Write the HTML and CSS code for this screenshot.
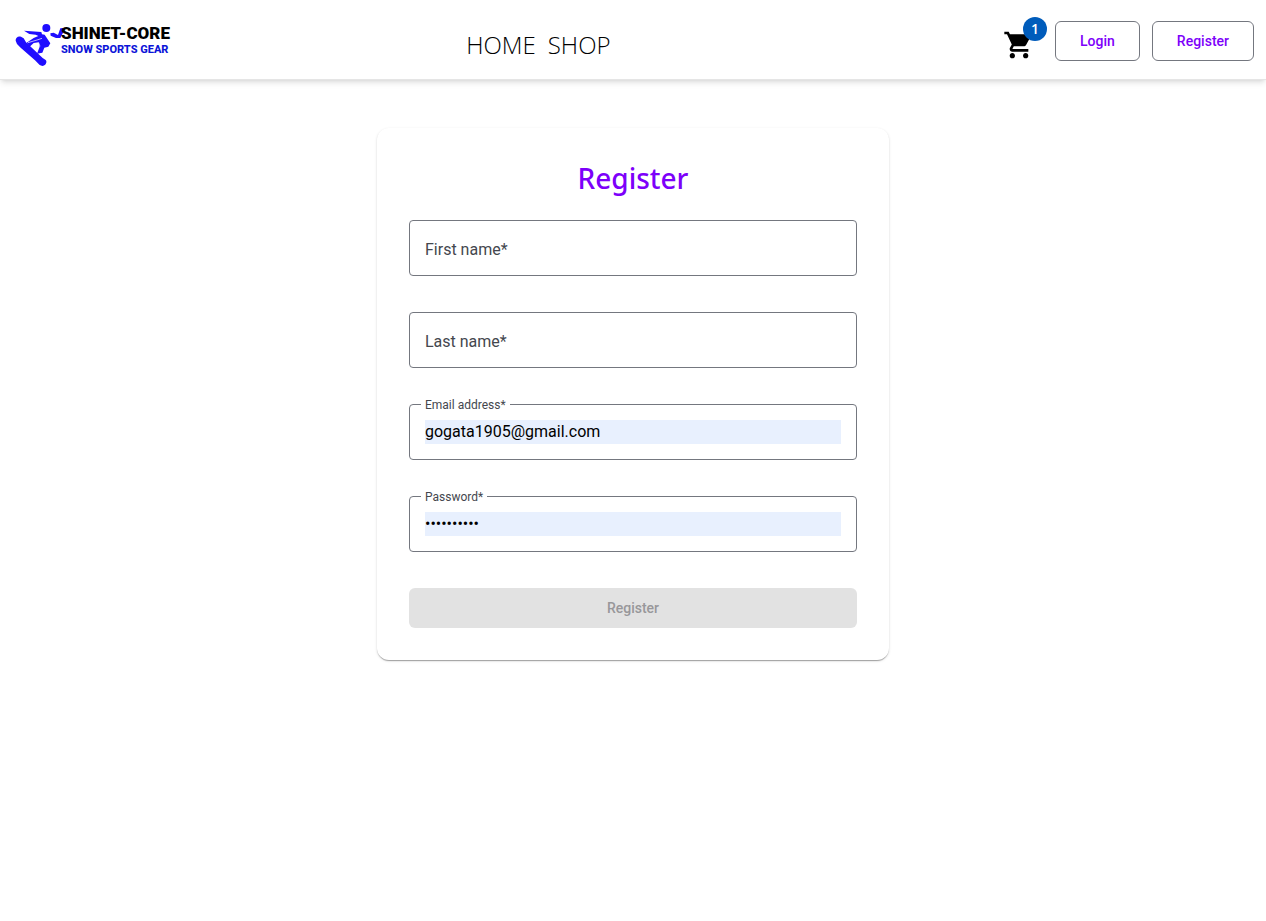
FILE: index.html
```html
<!DOCTYPE html>
<html lang="en">
<head>
<meta charset="utf-8">
<meta name="viewport" content="width=device-width, initial-scale=1">
<title>Register</title>
<link rel="stylesheet" href="styles.css">
</head>
<body>
<header class="header">
  <a class="logo" href="#">
    <svg class="logo-mark" viewBox="45 35 144 135" aria-hidden="true">
      <g fill="#1f0dff">
        <circle cx="139" cy="53" r="12"/>
        <path d="M47 91C46 81 55 76 63 79L71 84L78 96L128 143L137 149C143 155 136 167 127 167L119 164L105 150L62 112L51 101Z"/>
        <path d="M72 61L124 65L126 72L134 73L144 88L151 99L145 109L133 112L127 127L111 130L119 109L116 96L101 98L89 109L80 97L101 83L115 77L107 73L88 71Z"/>
        <path d="M151 69L161 67L174 74L181 54L189 53L189 67L181 83L168 83L152 76Z"/>
      </g>
      <path d="M84 97L111 89L126 84M116 97L120 108" fill="none" stroke="#fff" stroke-width="2"/>
    </svg>
    <span class="logo-text">
      <span class="logo-name">SHINET-CORE</span>
      <span class="logo-tag">SNOW SPORTS GEAR</span>
    </span>
  </a>
  <nav class="nav">
    <a href="#">HOME</a>
    <a href="#">SHOP</a>
  </nav>
  <div class="actions">
    <a class="cart" href="#" aria-label="Cart">
      <svg class="cart-icon" viewBox="0 0 24 24" aria-hidden="true"><path d="M7 18c-1.100 0-1.990.9-1.990 2S5.900 22 7 22s2-.9 2-2-.9-2-2-2zM1 2v2h2l3.600 7.590-1.350 2.450c-.16.28-.25.61-.25.960 0 1.100.9 2 2 2h12v-2H7.420c-.14 0-.25-.11-.25-.25l.03-.12.900-1.630h7.450c.75 0 1.410-.41 1.750-1.030l3.580-6.490c.08-.14.12-.31.12-.48 0-.55-.45-1-1-1H5.210l-.94-2H1zm16 16c-1.100 0-1.990.9-1.990 2s.89 2 1.990 2 2-.9 2-2-.9-2-2-2z"/></svg>
      <span class="badge">1</span>
    </a>
    <button class="button" type="button">Login</button>
    <button class="button" type="button">Register</button>
  </div>
</header>
<main class="page">
  <form class="card">
    <h1 class="title">Register</h1>
    <div class="field">
      <label class="label" for="first">First name*</label>
      <input class="input" id="first" type="text">
    </div>
    <div class="field">
      <label class="label" for="last">Last name*</label>
      <input class="input" id="last" type="text">
    </div>
    <div class="field filled">
      <label class="label" for="email">Email address*</label>
      <input class="input" id="email" type="email" value="gogata1905@gmail.com">
    </div>
    <div class="field filled">
      <label class="label" for="password">Password*</label>
      <input class="input" id="password" type="password" value="abcdefghij">
    </div>
    <button class="submit" type="submit" disabled>Register</button>
  </form>
</main>
</body>
</html>
```

FILE: styles.css
```css
* { box-sizing: border-box; }

body {
  margin: 0;
  background: #fff;
  font-family: Roboto, "Liberation Sans", sans-serif;
  font-size: 16px;
}

a { color: inherit; text-decoration: none; }

.header {
  display: grid;
  grid-template-columns: 12fr auto 17fr;
  align-items: center;
  padding: 12px;
  border-bottom: 1px solid #e5e5e5;
  background: #fff;
  box-shadow: 0 4px 6px -1px rgba(0, 0, 0, 0.1), 0 2px 4px -2px rgba(0, 0, 0, 0.1);
}

.logo {
  display: flex;
  align-items: center;
  padding: 10px 3px 0;
}

.logo-mark { width: 48px; height: 45px; }

.logo-text {
  display: flex;
  flex-direction: column;
  margin-left: -2px;
  padding-bottom: 8px;
  font-family: Roboto, "Liberation Sans", sans-serif;
  white-space: nowrap;
}

.logo-name { font-size: 17px; font-weight: 900; line-height: 18px; color: #000; }
.logo-tag { font-size: 11px; font-weight: 800; line-height: 16px; color: #0c14d8; }

.nav {
  display: flex;
  gap: 12px;
  padding-top: 11px;
  font-family: "Open Sans", "Noto Sans", sans-serif;
  font-size: 24px;
  font-weight: 300;
  line-height: 32px;
  color: #000;
}

.actions {
  display: flex;
  justify-content: flex-end;
  gap: 12px;
  padding-top: 3px;
}

.cart {
  position: relative;
  height: 40px;
  margin-right: 8px;
  padding-top: 8px;
}

.cart-icon { display: block; width: 32px; height: 32px; }

.badge {
  position: absolute;
  top: -4px;
  right: -12px;
  width: 24px;
  height: 24px;
  border-radius: 50%;
  background: #005cbb;
  color: #fff;
  font-family: "Open Sans", sans-serif;
  font-size: 14px;
  font-weight: 600;
  line-height: 24px;
  text-align: center;
}

.button {
  height: 40px;
  padding: 0 24px;
  border: 1px solid #74777f;
  border-radius: 6px;
  background: transparent;
  color: #7d00fa;
  font: 500 14px/20px Roboto, sans-serif;
}

.page { padding: 48px 16px; }

.card {
  display: flex;
  flex-direction: column;
  gap: 36px;
  max-width: 512px;
  margin: 0 auto;
  padding: 32px;
  border-radius: 12px;
  background: #fff;
  box-shadow: 0 2px 1px -1px rgba(0, 0, 0, 0.2), 0 1px 1px rgba(0, 0, 0, 0.14), 0 1px 3px rgba(0, 0, 0, 0.12);
}

.title {
  margin: 0 0 -12px;
  padding: 2px 0;
  color: #7d00fa;
  font: 500 28px/32px "Noto Sans", "Open Sans", sans-serif;
  text-align: center;
}

.field {
  position: relative;
  padding: 15px;
  border: 1px solid #74777f;
  border-radius: 4px;
}

.label {
  position: absolute;
  top: 17px;
  left: 15px;
  color: #44474e;
  line-height: 24px;
}

.filled .label {
  top: -8px;
  left: 11px;
  padding: 0 4px;
  background: #fff;
  font-size: 12px;
  line-height: 16px;
}

.input {
  display: block;
  width: 100%;
  height: 24px;
  padding: 0;
  border: 0;
  outline: 0;
  background: transparent;
  color: #000;
  font: 400 16px/24px Roboto, sans-serif;
}

.filled .input { background: #e8f0fe; }

.submit {
  height: 40px;
  border: 0;
  border-radius: 6px;
  background: #e2e2e2;
  color: #98979a;
  font: 500 14px/20px Roboto, sans-serif;
}
```
